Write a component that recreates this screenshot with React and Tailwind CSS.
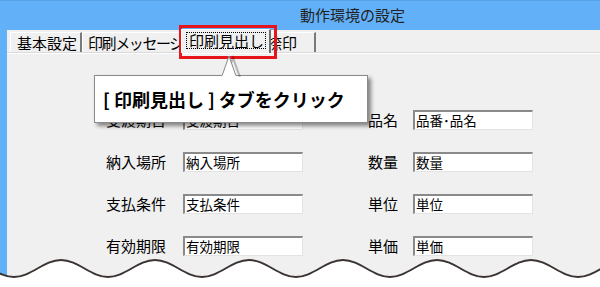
const jp = { fontFamily: '"Noto Sans CJK JP", "Noto Sans", sans-serif' };

// sine-ish wave for the torn bottom edge
function wavePath() {
  const h = 47;
  const k = 17.1;
  let x = -33;
  let up = true;
  let d = `M ${x} 260`;
  while (x < 640) {
    const y1 = up ? 260 : 277;
    const y2 = up ? 277 : 260;
    d += ` C ${x + k} ${y1}, ${x + h - k} ${y2}, ${x + h} ${y2}`;
    x += h;
    up = !up;
  }
  return d;
}

function Field({ label, value, labelW }) {
  return (
    <>
      <span className={`${labelW} text-[15px] leading-5 text-black`}>{label}</span>
      <div className="w-[120px] h-5 bg-white border-t-2 border-l-2 border-t-[#8a8a8a] border-l-[#8a8a8a] border-b border-r border-b-[#e3e3e3] border-r-[#e3e3e3] text-[13.5px] leading-[17px] pl-px text-black overflow-hidden whitespace-nowrap">
        {value}
      </div>
    </>
  );
}

export default function App() {
  const d = wavePath();
  return (
    <div className="relative w-[600px] h-[287px] overflow-hidden bg-white" style={jp}>
      <div className="flex flex-col h-[287px] bg-[#62b0f8]">
        {/* Title bar */}
        <div className="h-[30px] flex items-center justify-center pl-[105px] text-[15px] text-[#222] border-t border-[#5aa2e6]">
          動作環境の設定
        </div>

        {/* Window body */}
        <div className="flex-1 ml-[7px] bg-[#f0f0f0] flex flex-col">
          {/* Tabs */}
          <div className="h-[23px] flex items-end pl-[3px] border-b border-[#dadada]">
            <div className="w-[72px] h-[20px] border-t border-l border-white border-r-2 border-r-[#7a7a7a] pl-[6px] text-[15px] leading-[19px] text-black whitespace-nowrap overflow-hidden">
              基本設定
            </div>
            <div className="w-[101px] h-[20px] border-t border-l border-white border-r-2 border-r-[#7a7a7a] pl-[5px] text-[15px] leading-[19px] tracking-[-1.4px] text-black whitespace-nowrap overflow-hidden">
              印刷メッセージ
            </div>
            <div className="relative z-10 -ml-[2px] -mr-[4px] -mb-px w-[90px] h-[24px] bg-[#f0f0f0] border-t border-l border-white border-r-2 border-r-[#6e6e6e] pt-[2px] pl-[4px]">
              <div className="w-[80px] h-[17px] border border-dotted border-black text-[15px] leading-[15px] text-black pl-[2px] whitespace-nowrap">
                印刷見出し
              </div>
            </div>
            <div className="w-[49px] h-[20px] border-t border-white border-r-2 border-r-[#7a7a7a] pl-0 text-[15px] leading-[19px] text-black whitespace-nowrap overflow-hidden">
              捺印
            </div>
          </div>

          {/* Form */}
          <div className="flex-1 border-t border-white pt-[56px] pl-[99px]">
            <div className="grid grid-cols-[77px_120px_65px_45px_120px] gap-y-[22px] items-center">
              <Field label="受渡期日" value="受渡期日" labelW="w-[77px]" />
              <span />
              <Field label="品名" value="品番･品名" labelW="w-[45px]" />
              <Field label="納入場所" value="納入場所" labelW="w-[77px]" />
              <span />
              <Field label="数量" value="数量" labelW="w-[45px]" />
              <Field label="支払条件" value="支払条件" labelW="w-[77px]" />
              <span />
              <Field label="単位" value="単位" labelW="w-[45px]" />
              <Field label="有効期限" value="有効期限" labelW="w-[77px]" />
              <span />
              <Field label="単価" value="単価" labelW="w-[45px]" />
            </div>
          </div>
        </div>
      </div>

      {/* Torn bottom edge */}
      <svg className="absolute left-0 top-0" width="600" height="287" viewBox="0 0 600 287">
        <path d={`${d} L 640 287 L -40 287 Z`} fill="#ffffff" />
        <path d={d} fill="none" stroke="#3b3331" strokeWidth="2" />
      </svg>

      {/* Red highlight around the tab */}
      <div className="absolute left-[179px] top-[25px] w-[98px] h-[34px] border-[3px] border-[#e8141b]" />

      {/* Callout */}
      <div className="absolute left-[94px] top-[75px] w-[274px] h-[48px] bg-white border border-[#8a8a8a] shadow-[3px_3px_4px_rgba(0,0,0,0.45)] flex items-center pl-[8px]">
        <span className="text-[18px] font-bold text-black whitespace-nowrap">[ 印刷見出し ] タブをクリック</span>
      </div>
      <svg className="absolute left-[218px] top-[54px]" width="26" height="23" viewBox="0 0 26 23">
        <path d="M 6 22 L 13 3 L 20 22" fill="none" stroke="rgba(0,0,0,0.25)" strokeWidth="2" transform="translate(2 1)" />
        <path d="M 4 22 L 11 2 L 18 22" fill="#ffffff" stroke="#8a8a8a" strokeWidth="1" />
        <rect x="4.5" y="21" width="13" height="2" fill="#ffffff" />
      </svg>
    </div>
  );
}
